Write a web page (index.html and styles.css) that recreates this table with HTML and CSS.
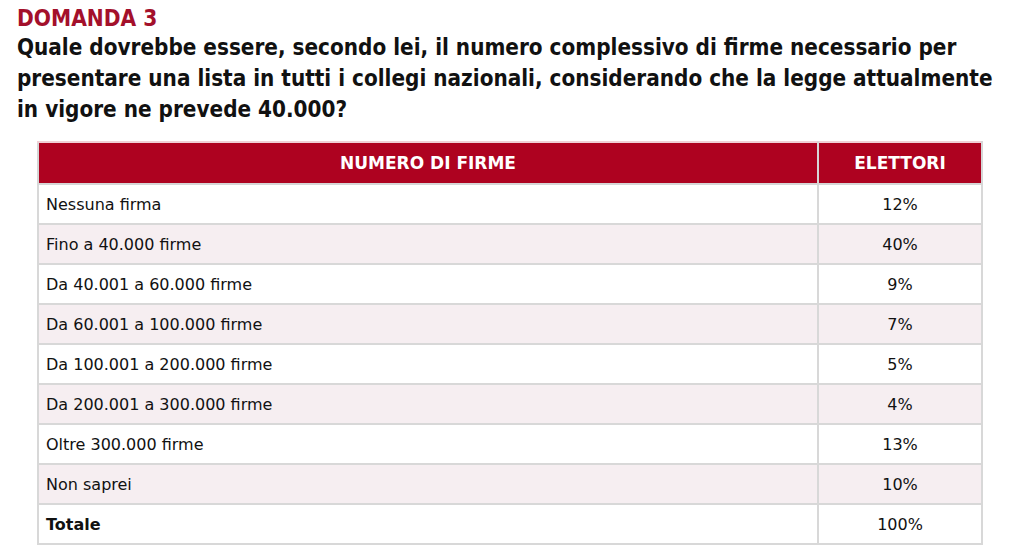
FILE: index.html
```html
<!DOCTYPE html>
<html lang="it">
<head>
<meta charset="utf-8">
<link rel="stylesheet" href="styles.css">
</head>
<body>
<div class="page">
  <h1 class="label">DOMANDA 3</h1>
  <h2 class="question">Quale dovrebbe essere, secondo lei, il numero complessivo di firme necessario per presentare una lista in tutti i collegi nazionali, considerando che la legge attualmente in vigore ne prevede 40.000?</h2>
  <table class="data">
    <thead>
      <tr><th class="c1">NUMERO DI FIRME</th><th class="c2">ELETTORI</th></tr>
    </thead>
    <tbody>
      <tr><td>Nessuna firma</td><td class="num">12%</td></tr>
      <tr><td>Fino a 40.000 firme</td><td class="num">40%</td></tr>
      <tr><td>Da 40.001 a 60.000 firme</td><td class="num">9%</td></tr>
      <tr><td>Da 60.001 a 100.000 firme</td><td class="num">7%</td></tr>
      <tr><td>Da 100.001 a 200.000 firme</td><td class="num">5%</td></tr>
      <tr><td>Da 200.001 a 300.000 firme</td><td class="num">4%</td></tr>
      <tr><td>Oltre 300.000 firme</td><td class="num">13%</td></tr>
      <tr><td>Non saprei</td><td class="num">10%</td></tr>
      <tr><td class="total">Totale</td><td class="num">100%</td></tr>
    </tbody>
  </table>
</div>
</body>
</html>
```
FILE: styles.css
```css
html, body { margin: 0; padding: 0; background: #fff; }
body { font-family: "DejaVu Sans Condensed", "DejaVu Sans", sans-serif; color: #111; }
.page { padding: 4px 0 0 17px; width: 990px; }
.label { margin: 0; font-size: 22.5px; line-height: 28px; color: #a3102b; font-weight: bold; }
.question { margin: 0; font-size: 22.3px; line-height: 31px; font-weight: bold; color: #111; }
.data { margin: 16px 0 0 20px; width: 946px; border-collapse: collapse; font-family: "DejaVu Sans", sans-serif; font-size: 16px; }
.data th { background: #ae0220; color: #fff; font-weight: bold; height: 40px; padding: 0; border: 2px solid #d6d6d6; border-top: 2px solid #f0d0d5; font-size: 17px; }
.data th.c2 { width: 162px; }
.data td { height: 38px; padding: 0 0 0 7px; border: 2px solid #d8d8d8; }
.data td.num { text-align: center; padding: 0; }
.data tbody tr:nth-child(even) td { background: #f6eef1; }
.data td.total { font-weight: bold; }
```
